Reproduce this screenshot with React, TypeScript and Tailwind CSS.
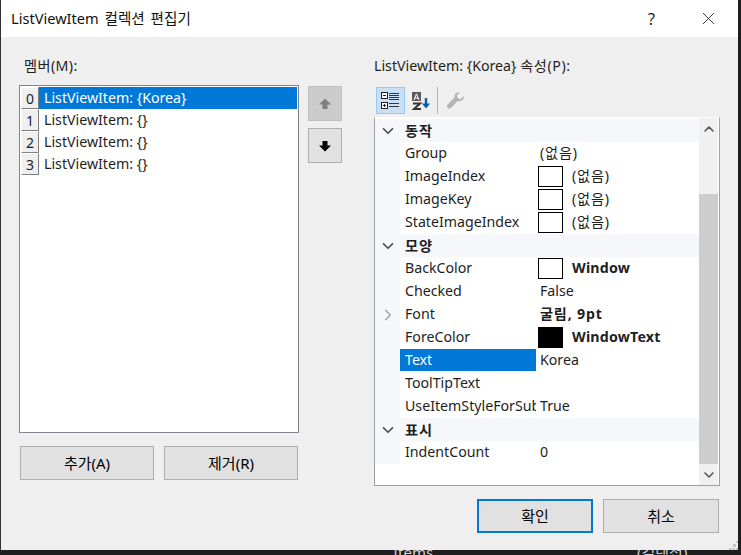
import { ChevronDown, ChevronRight, ChevronUp, X } from "lucide-react";

type Prop = {
  name: string;
  value?: string;
  swatch?: "white" | "black";
  bold?: boolean;
  hangul?: boolean; // hangul runs a bit wider in the original font
  expandable?: boolean;
  selected?: boolean;
};

type Group = { title: string; props: Prop[] };

const groups: Group[] = [
  {
    title: "동작",
    props: [
      { name: "Group", value: "(없음)", hangul: true },
      { name: "ImageIndex", value: "(없음)", swatch: "white", hangul: true },
      { name: "ImageKey", value: "(없음)", swatch: "white", hangul: true },
      { name: "StateImageIndex", value: "(없음)", swatch: "white", hangul: true },
    ],
  },
  {
    title: "모양",
    props: [
      { name: "BackColor", value: "Window", swatch: "white", bold: true },
      { name: "Checked", value: "False" },
      { name: "Font", value: "굴림, 9pt", bold: true, hangul: true, expandable: true },
      { name: "ForeColor", value: "WindowText", swatch: "black", bold: true },
      { name: "Text", value: "Korea", selected: true },
      { name: "ToolTipText" },
      { name: "UseItemStyleForSubItems", value: "True" },
    ],
  },
  {
    title: "표시",
    props: [{ name: "IndentCount", value: "0" }],
  },
];

const members = ["ListViewItem: {Korea}", "ListViewItem: {}", "ListViewItem: {}", "ListViewItem: {}"];

function PushButton({ label, className }: { label: string; className: string }) {
  return (
    <button
      type="button"
      className={`h-[34px] bg-[#e1e1e1] text-[15px] text-black flex items-center justify-center ${className}`}
    >
      {label}
    </button>
  );
}

function ArrowIcon({ up, color }: { up?: boolean; color: string }) {
  return (
    <svg width="14" height="14" viewBox="0 0 14 14" className={up ? "" : "rotate-180"}>
      <path d="M7 1.5 L13 7.5 H9.5 V12 H4.5 V7.5 H1 Z" fill={color} />
    </svg>
  );
}

function PropRow({ prop }: { prop: Prop }) {
  return (
    <div className="flex h-[23px]">
      <div className="w-[25px] shrink-0 bg-[#f5f7fb] flex items-center justify-center">
        {prop.expandable && <ChevronRight size={18} strokeWidth={2.2} className="text-[#a5a5a5]" />}
      </div>
      <div
        className={`w-[136px] shrink-0 h-[22px] pl-[5px] overflow-hidden whitespace-nowrap leading-[22px] ${
          prop.selected ? "bg-[#0078d7] text-white" : "bg-white text-[#1e1e1e]"
        }`}
      >
        {prop.name}
      </div>
      <div
        className={`ml-px flex-1 h-[22px] bg-white flex items-center whitespace-nowrap text-[#1e1e1e] ${
          prop.bold ? "font-bold" : ""
        } ${prop.hangul ? "tracking-[0.8px]" : prop.bold ? "tracking-[0.2px]" : ""} ${
          prop.swatch ? "pl-px" : "pl-[3px]"
        }`}
      >
        {prop.swatch && (
          <span
            className={`w-[25px] h-[21px] mr-[9px] border border-black shrink-0 ${
              prop.swatch === "black" ? "bg-black" : "bg-white"
            }`}
          />
        )}
        {prop.value}
      </div>
    </div>
  );
}

export default function App() {
  return (
    <div
      className="w-[741px] h-[555px] overflow-hidden bg-[#1e1e1e] text-[14.2px]"
      style={{ fontFamily: '"Noto Sans", "Noto Sans CJK KR", sans-serif' }}
    >
      <div className="w-[738px] h-[550px] border-l border-[#333333] flex flex-col relative">
        {/* title bar */}
        <div className="h-[37px] bg-white flex items-center pl-[10px] shrink-0">
          <span className="text-[14.6px] text-[#111111] [word-spacing:2px]">ListViewItem 컬렉션 편집기</span>
          <span className="ml-auto text-[16px] text-[#222222] mr-[43px]">?</span>
          <X size={21} strokeWidth={1} className="text-[#222222] mr-[19px]" />
        </div>

        {/* body */}
        <div className="flex-1 bg-[#efefef] flex pt-[19px]">
          {/* members */}
          <div className="w-[373px] shrink-0 flex flex-col pl-[18px]">
            <div className="h-[29px] pl-[5px] leading-[20px] text-[#1e1e1e] tracking-[0.4px]">멤버(M):</div>
            <div className="flex">
              <div className="w-[280px] h-[348px] border border-[#82858e] bg-white p-px">
                {members.map((m, i) => (
                  <div key={i} className="flex h-[22px]">
                    <div className="w-[18px] h-[22px] shrink-0 bg-[#efefef] border-r border-b border-[#808080] border-t border-l border-t-white border-l-white flex items-center justify-center text-[14px] text-[#1e1e1e]">
                      {i}
                    </div>
                    <div
                      className={`flex-1 pl-[5px] leading-[21px] ${
                        i === 0 ? "bg-[#0078d7] text-white" : "text-[#1e1e1e]"
                      }`}
                    >
                      {m}
                    </div>
                  </div>
                ))}
              </div>
              <div className="ml-[9px] flex flex-col gap-[7px] pt-px">
                <div className="w-[34px] h-[35px] bg-[#cccccc] border border-[#bfbfbf] flex items-center justify-center">
                  <ArrowIcon up color="#7f7f7f" />
                </div>
                <div className="w-[34px] h-[35px] bg-[#e1e1e1] border border-[#adadad] flex items-center justify-center">
                  <ArrowIcon color="#000000" />
                </div>
              </div>
            </div>
            <div className="flex gap-[10px] mt-[13px] pl-px">
              <PushButton label="추가(A)" className="w-[134px] border border-[#adadad]" />
              <PushButton label="제거(R)" className="w-[134px] border border-[#adadad]" />
            </div>
          </div>

          {/* properties */}
          <div className="flex-1 flex flex-col">
            <div className="h-[21px] leading-[20px] text-[#1e1e1e]">
              ListViewItem: {"{Korea}"} <span className="tracking-[0.6px]">속성(P):</span>
            </div>
            <div className="h-[29px] mt-[9px] flex items-center pl-[2px] shrink-0">
              <div className="w-[29px] h-[27px] bg-[#c9e0f7] border border-[#99c9ef] flex items-center justify-center">
                <svg width="19" height="18" viewBox="0 0 19 18">
                  <rect x="0.5" y="0.5" width="6" height="6" fill="#ffffff" stroke="#222222" />
                  <path d="M2 3.5h3" stroke="#222222" />
                  <rect x="0.5" y="10.5" width="6" height="6" fill="#ffffff" stroke="#222222" />
                  <path d="M2 13.5h3M3.5 12v3" stroke="#222222" />
                  <path d="M8 1.5h10M8 3.5h10M8 5.5h10M8 7.5h10M8 11.5h10M8 14.5h10" stroke="#333333" />
                </svg>
              </div>
              <div className="w-[27px] h-[27px] ml-[2px] flex items-center justify-center">
                <svg width="20" height="20" viewBox="0 0 20 20">
                  <rect x="1" y="1" width="9" height="9" fill="#5a5a5a" />
                  <path d="M3 9 L5.5 2.8 L8 9 M3.8 7h3.4" fill="none" stroke="#ffffff" />
                  <path d="M2 12.5h7l-6 5.5h7" fill="none" stroke="#333333" strokeWidth="2" />
                  <path d="M15 7v8" stroke="#0a5aa8" strokeWidth="2.4" />
                  <path d="M11 12.5l4 5 4-5z" fill="#0a5aa8" />
                </svg>
              </div>
              <div className="w-px h-[27px] bg-[#b5b5b5] ml-[3px]" />
              <div className="w-[24px] h-[27px] ml-[5px] flex items-center justify-center">
                <svg width="21" height="20" viewBox="0 0 22 22">
                  <path
                    d="M20 5.5 L16.5 9 L13.5 8 L12.5 5 L16 1.5 C12.5 0.5 9.5 3 10 7 L2 15.5 C0.8 17 2.5 20 5 19.5 L13.5 11 C17.5 12 21 9.5 20 5.5 Z"
                    fill="#b4b4b4"
                  />
                </svg>
              </div>
            </div>

            <div className="w-[346px] h-[369px] mt-[2px] bg-white border border-[#a0a0a0] border-t-white flex">
              <div className="w-[324px] shrink-0 pt-px">
                {groups.map((g) => (
                  <div key={g.title}>
                    <div className="flex h-[23px] bg-[#f5f7fb] items-center">
                      <div className="w-[25px] shrink-0 flex items-center justify-center">
                        <ChevronDown size={18} strokeWidth={2.2} className="text-[#4a4a4a]" />
                      </div>
                      <div className="pl-[5px] font-bold text-[#1e1e1e] tracking-[1px]">{g.title}</div>
                    </div>
                    {g.props.map((p) => (
                      <PropRow key={p.name} prop={p} />
                    ))}
                  </div>
                ))}
              </div>
              <div className="w-[19px] shrink-0 flex flex-col">
                <div className="h-[21px] flex items-center justify-center shrink-0 bg-[#f0f0f0]">
                  <ChevronUp size={16} strokeWidth={2.4} className="text-[#555555]" />
                </div>
                <div className="flex-1 flex flex-col bg-[#f0f0f0]">
                  <div className="h-[55px]" />
                  <div className="flex-1 bg-[#cdcdcd]" />
                </div>
                <div className="h-[21px] flex items-center justify-center shrink-0 bg-[#f0f0f0]">
                  <ChevronDown size={16} strokeWidth={2.4} className="text-[#555555]" />
                </div>
              </div>
            </div>

            <div className="flex gap-[10px] mt-[13px] pl-[103px]">
              <PushButton label="확인" className="w-[116px] border-2 border-[#0078d7]" />
              <PushButton label="취소" className="w-[116px] border border-[#adadad]" />
            </div>
          </div>
        </div>

        {/* resize grip */}
        <svg width="9" height="9" viewBox="0 0 9 9" className="absolute right-0 bottom-0">
          <path d="M7 0h2v2H7zM4 3h3v3H4zM0 7h3v2H0zM4 7h2v2H4zM7 7h2v2H7z" fill="#c4c4c4" />
        </svg>
      </div>

      {/* what shows of the window behind */}
      <div className="h-[5px] relative text-[#d4d4d4] text-[15px] leading-[15px] overflow-hidden">
        <span className="absolute left-[393px] top-[-5px]">Items</span>
        <span className="absolute left-[637px] top-[-5px]">(컬렉션)</span>
      </div>
    </div>
  );
}
